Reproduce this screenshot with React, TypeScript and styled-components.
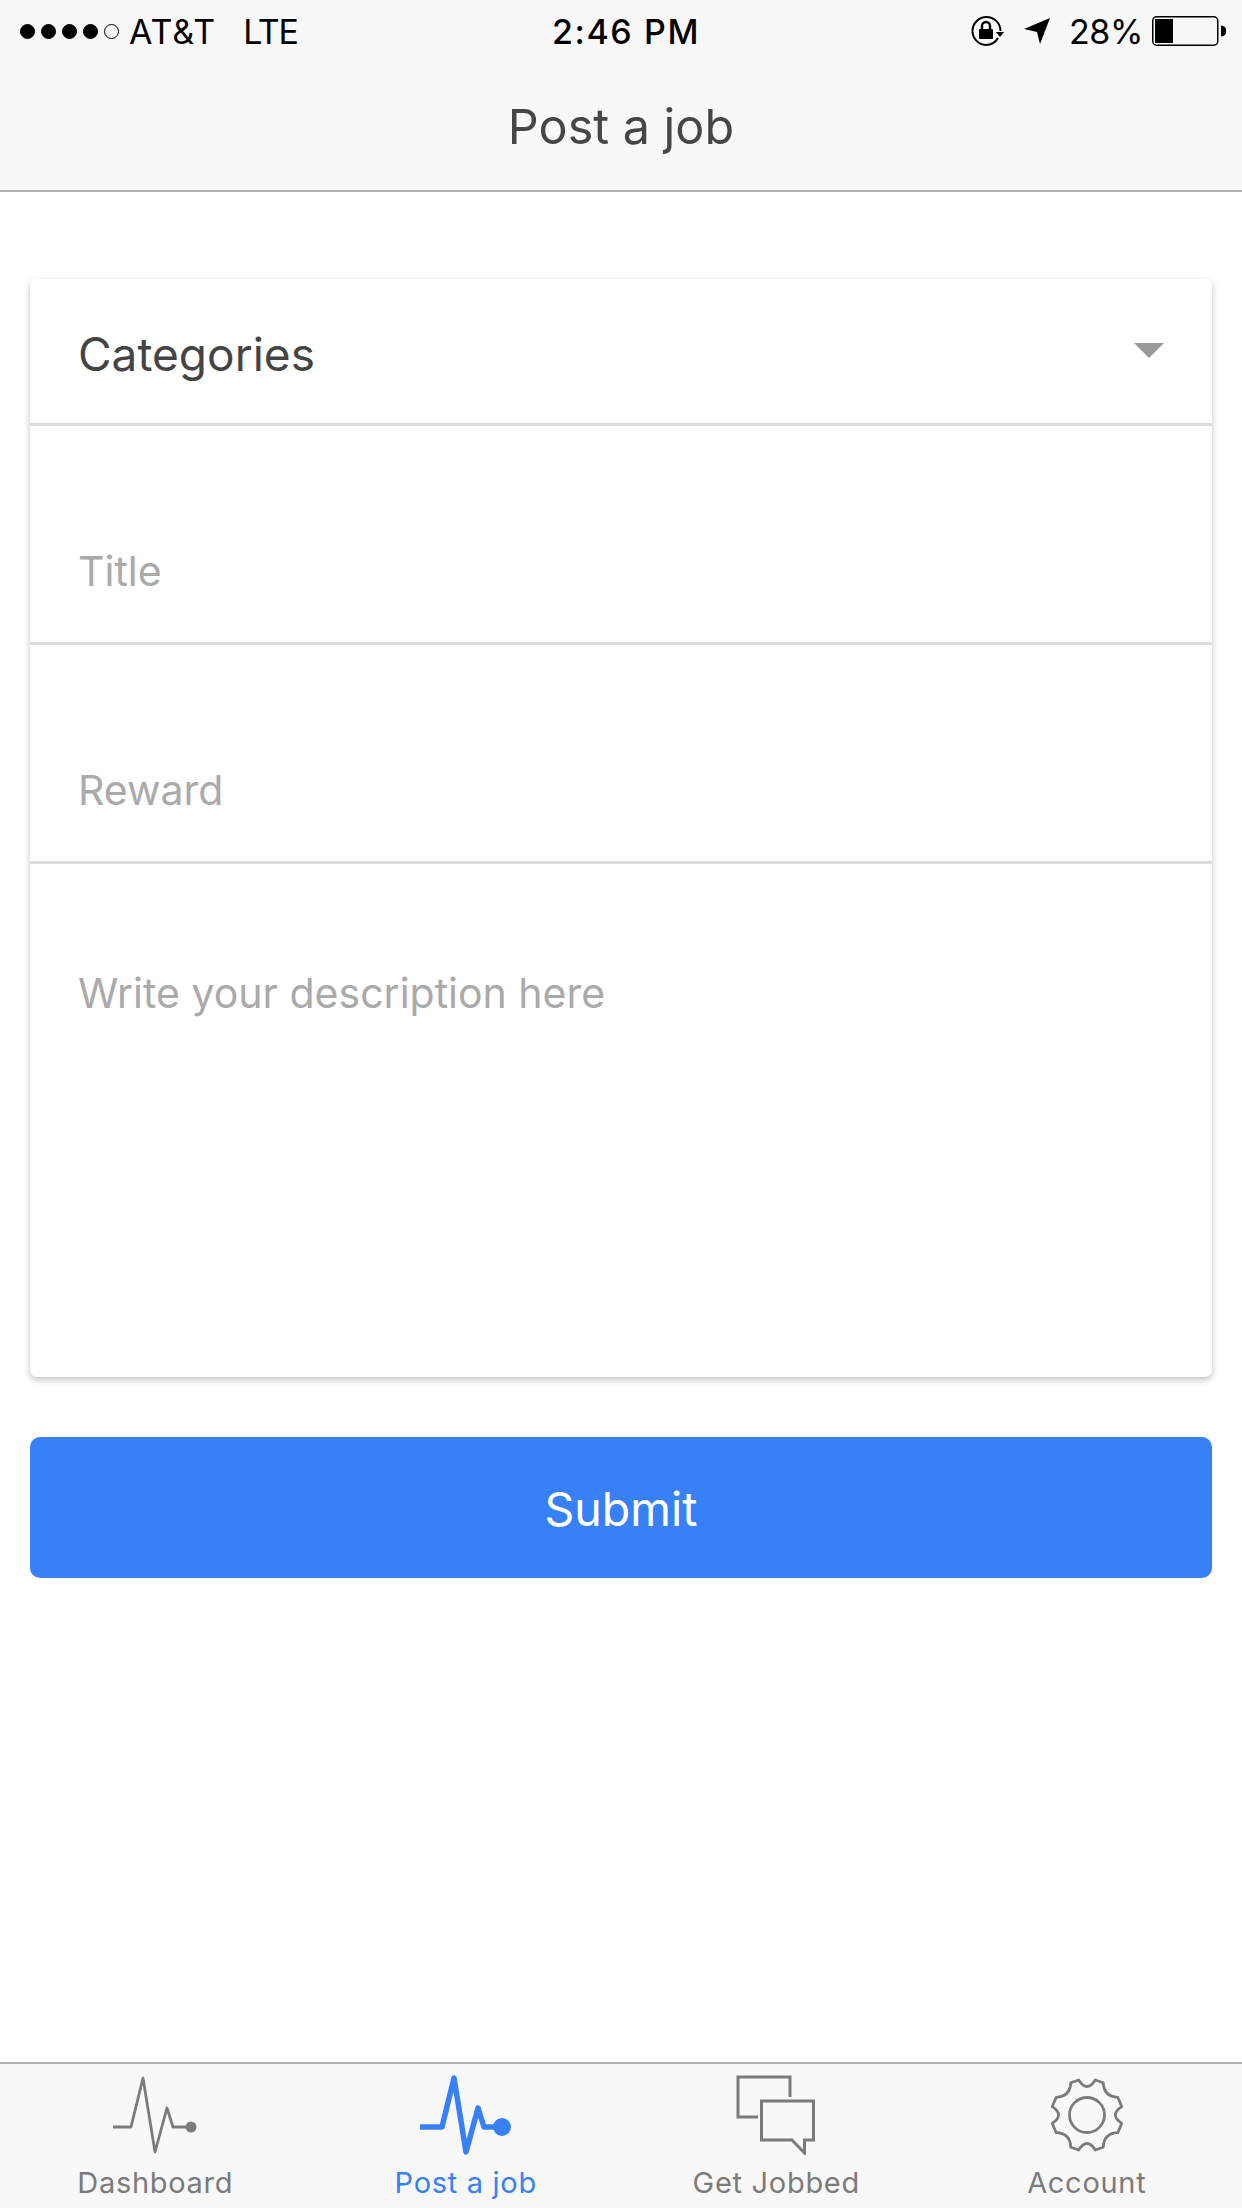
import styled, { createGlobalStyle } from "styled-components";

const color_bar = "#f8f8f8";
const color_blue = "#3880f5";
const color_grey = "#7b7b7b";
const font_stack = '"Inter", "Roboto", "Liberation Sans", sans-serif';

const GlobalStyle = createGlobalStyle`
  html, body {
    margin: 0;
    padding: 0;
    background: #ffffff;
  }

  * {
    box-sizing: border-box;
  }
`;

const Page = styled.div`
  display: flex;
  flex-direction: column;
  width: 1242px;
  height: 2208px;
  overflow: hidden;
  background: #ffffff;
  font-family: ${font_stack};
`;

const Header = styled.header`
  display: flex;
  flex-direction: column;
  height: 192px;
  background: ${color_bar};
  border-bottom: 2px solid #b2b2b2;
`;

const StatusBar = styled.div`
  display: grid;
  grid-template-columns: 1fr auto 1fr;
  align-items: center;
  height: 62px;
  padding: 0 16px 0 20px;
  font-size: 34px;
  color: #000000;
`;

const StatusLeft = styled.div`
  display: flex;
  align-items: center;
`;

const StatusRight = styled.div`
  display: flex;
  align-items: center;
  justify-content: flex-end;
`;

const Signal = styled.div`
  display: flex;
  gap: 6px;
  margin-right: 10px;
`;

const SignalDot = styled.span<{ $empty?: boolean }>`
  width: 15px;
  height: 15px;
  border-radius: 50%;
  border: 1.5px solid #000000;
  background: ${(p) => (p.$empty ? "transparent" : "#000000")};
`;

const Carrier = styled.span`
  margin-right: 27px;
  letter-spacing: 1px;
`;

const Network = styled.span`
  letter-spacing: -1.4px;
`;

const Clock = styled.span`
  font-weight: 500;
  letter-spacing: 1.6px;
  margin-left: 6px;
`;

const Percent = styled.span`
  margin: 0 9px 0 18px;
  letter-spacing: -0.4px;
`;

const StatusIcon = styled.svg`
  display: block;
  flex: none;
`;

const LocationGlyph = styled(StatusIcon)`
  margin-left: 19px;
`;

const NavTitle = styled.h1`
  flex: 1;
  display: flex;
  align-items: center;
  justify-content: center;
  margin: 0;
  font-size: 48.5px;
  font-weight: 400;
  color: #464646;
`;

const Main = styled.main`
  flex: 1;
  display: flex;
  flex-direction: column;
  padding: 87px 30px 0;
`;

const Card = styled.section`
  display: flex;
  flex-direction: column;
  height: 1098px;
  background: #ffffff;
  border-radius: 7px;
  box-shadow: 0 3px 7px rgba(0, 0, 0, 0.24);
`;

const SelectRow = styled.div`
  display: flex;
  align-items: center;
  justify-content: space-between;
  height: 147px;
  padding: 6px 48px 0 48px;
  border-bottom: 3px solid #dddddd;
  font-size: 46px;
  color: #444444;
`;

const SelectArrow = styled.span`
  width: 0;
  height: 0;
  margin-bottom: 8px;
  border-left: 15px solid transparent;
  border-right: 15px solid transparent;
  border-top: 15px solid #999999;
`;

const FieldRow = styled.div`
  display: flex;
  align-items: flex-end;
  height: 219px;
  padding: 0 48px 47px;
  border-bottom: 3px solid #dddddd;
`;

const AreaRow = styled.div`
  flex: 1;
  padding: 105px 48px 0;
`;

const Placeholder = styled.span`
  display: block;
  font-size: 41px;
  line-height: 48px;
  color: #aaaaaa;
`;

const SubmitButton = styled.button`
  height: 141px;
  margin-top: 60px;
  padding: 2px 0 0;
  border: 0;
  border-radius: 10px;
  background: ${color_blue};
  color: #ffffff;
  font-family: inherit;
  font-size: 46.5px;
  font-weight: 400;
`;

const TabBar = styled.nav`
  display: grid;
  grid-template-columns: repeat(4, 1fr);
  height: 146px;
  background: ${color_bar};
  border-top: 2px solid #b2b2b2;
`;

const Tab = styled.div<{ $active?: boolean }>`
  display: flex;
  flex-direction: column;
  align-items: center;
  padding-top: 11px;
  color: ${(p) => (p.$active ? color_blue : color_grey)};
  font-size: 29px;
  letter-spacing: 0.7px;
`;

const TabIcon = styled.svg`
  display: block;
  margin-bottom: 7px;
`;

const TabLabel = styled.span`
  line-height: 42px;
`;

function PulseIcon({ bold }: { bold?: boolean }) {
  return (
    <TabIcon width="100" height="80" viewBox="0 0 100 80">
      <polyline
        points={`${bold ? 4 : 8},52 26,52 38,3 50,77 62,33 68,52 85,52`}
        fill="none"
        stroke="currentColor"
        strokeWidth={bold ? 5.5 : 2.8}
        strokeLinejoin="round"
      />
      <circle cx="86" cy="52" r={bold ? 9 : 5.5} fill="currentColor" />
    </TabIcon>
  );
}

function ChatIcon() {
  return (
    <TabIcon width="100" height="80" viewBox="0 0 100 80">
      <g fill="none" stroke="currentColor" strokeWidth="3">
        <path d="M64 22V2H12v40h20" />
        <path d="M35.5 26h52v39h-9v13L66 65H35.5z" />
      </g>
    </TabIcon>
  );
}

function GearIcon() {
  return (
    <TabIcon width="100" height="80" viewBox="-50 -40 100 80">
      <path
        d="M8.3 -35L16.2 -32.3Q17 -18 30.8 -17.7L34.8 -8.3Q22 0 34.8 8.3L30.8 17.7Q17 18 16.2 32.3L8.3 35Q0 22 -8.3 35L-16.2 32.3Q-17 18 -30.8 17.7L-34.8 8.3Q-22 0 -34.8 -8.3L-30.8 -17.7Q-17 -18 -16.2 -32.3L-8.3 -35Q0 -22 8.3 -35Z"
        fill="none"
        stroke="currentColor"
        strokeWidth="2.8"
        strokeLinejoin="round"
      />
      <circle r="17.5" fill="none" stroke="currentColor" strokeWidth="2.8" />
    </TabIcon>
  );
}

function RotationLockIcon() {
  return (
    <StatusIcon width="34" height="30" viewBox="0 0 34 30">
      <path
        d="M29.5 15A14 14 0 1 0 15 29 14 14 0 0 0 27 22"
        fill="none"
        stroke="#000000"
        strokeWidth="2"
      />
      <path d="M25 16h8l-4 5z" fill="#000000" />
      <rect x="8" y="13" width="14" height="10" rx="1" fill="#000000" />
      <path
        d="M11 13V10a4 4 0 0 1 8 0v3"
        fill="none"
        stroke="#000000"
        strokeWidth="2.4"
      />
    </StatusIcon>
  );
}

function LocationIcon() {
  return (
    <LocationGlyph width="27" height="26" viewBox="0 0 27 26">
      <path d="M26 0L0 11l13 3 3 12z" fill="#000000" />
    </LocationGlyph>
  );
}

function BatteryIcon() {
  return (
    <StatusIcon width="74" height="30" viewBox="0 0 74 30">
      <rect x="0.75" y="0.75" width="65" height="28.5" rx="4" fill="none" stroke="#000000" strokeWidth="1.5" />
      <rect x="3" y="3" width="18" height="24" fill="#000000" />
      <path d="M69 9.5a5.5 5.5 0 0 1 0 11z" fill="#000000" />
    </StatusIcon>
  );
}

export default function App() {
  return (
    <Page>
      <GlobalStyle />
      <Header>
        <StatusBar>
          <StatusLeft>
            <Signal>
              <SignalDot />
              <SignalDot />
              <SignalDot />
              <SignalDot />
              <SignalDot $empty />
            </Signal>
            <Carrier>AT&amp;T</Carrier>
            <Network>LTE</Network>
          </StatusLeft>
          <Clock>2:46 PM</Clock>
          <StatusRight>
            <RotationLockIcon />
            <LocationIcon />
            <Percent>28%</Percent>
            <BatteryIcon />
          </StatusRight>
        </StatusBar>
        <NavTitle>Post a job</NavTitle>
      </Header>
      <Main>
        <Card>
          <SelectRow>
            <span>Categories</span>
            <SelectArrow />
          </SelectRow>
          <FieldRow>
            <Placeholder>Title</Placeholder>
          </FieldRow>
          <FieldRow>
            <Placeholder>Reward</Placeholder>
          </FieldRow>
          <AreaRow>
            <Placeholder>Write your description here</Placeholder>
          </AreaRow>
        </Card>
        <SubmitButton>Submit</SubmitButton>
      </Main>
      <TabBar>
        <Tab>
          <PulseIcon />
          <TabLabel>Dashboard</TabLabel>
        </Tab>
        <Tab $active>
          <PulseIcon bold />
          <TabLabel>Post a job</TabLabel>
        </Tab>
        <Tab>
          <ChatIcon />
          <TabLabel>Get Jobbed</TabLabel>
        </Tab>
        <Tab>
          <GearIcon />
          <TabLabel>Account</TabLabel>
        </Tab>
      </TabBar>
    </Page>
  );
}
